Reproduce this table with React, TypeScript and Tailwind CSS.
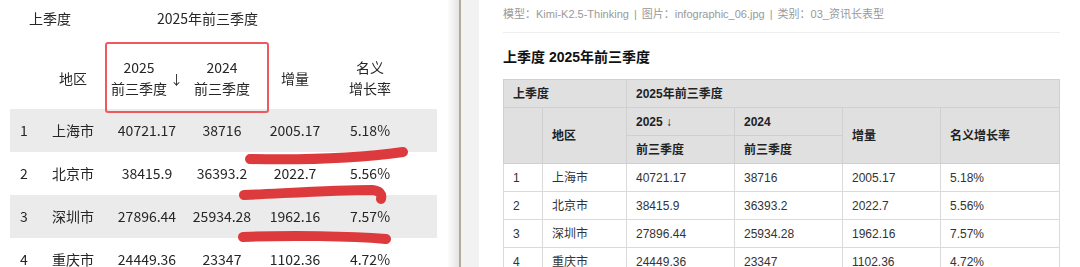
import React from 'react'

const photoRows = [
  { n: '1', city: '上海市', a: '40721.17', b: '38716', inc: '2005.17', rate: '5.18%', shade: true },
  { n: '2', city: '北京市', a: '38415.9', b: '36393.2', inc: '2022.7', rate: '5.56%', shade: false },
  { n: '3', city: '深圳市', a: '27896.44', b: '25934.28', inc: '1962.16', rate: '7.57%', shade: true },
  { n: '4', city: '重庆市', a: '24449.36', b: '23347', inc: '1102.36', rate: '4.72%', shade: false },
]

const cols = 'grid grid-cols-[28px_70px_78px_72px_74px_76px]'

function PhotoPanel() {
  return (
    <div className="relative h-full w-[447px] shrink-0 overflow-hidden bg-white font-['Noto_Sans_CJK_SC','Noto_Sans',sans-serif] text-[14px] text-[#262626] blur-[0.3px]">
      <div className="flex h-[36px] items-center">
        <span className="ml-[29px] w-[128px]">上季度</span>
        <span>2025年前三季度</span>
      </div>
      <div className={`${cols} mx-[10px] mt-[11px] h-[62px] items-center leading-[21px]`}>
        <div />
        <div className="text-center">地区</div>
        <div className="flex items-center justify-center gap-[3px]">
          <div className="flex flex-col items-center">
            <span>2025</span>
            <span>前三季度</span>
          </div>
          <span className="text-[13px]">↓</span>
        </div>
        <div className="flex flex-col items-center">
          <span>2024</span>
          <span>前三季度</span>
        </div>
        <div className="text-center">增量</div>
        <div className="flex flex-col items-center">
          <span>名义</span>
          <span>增长率</span>
        </div>
      </div>
      {photoRows.map((r) => (
        <div key={r.n} className={`${cols} mx-[10px] h-[43px] items-center ${r.shade ? 'bg-[#ebebeb]' : 'bg-white'}`}>
          <span className="pl-[10px]">{r.n}</span>
          <span className="text-center">{r.city}</span>
          <span className="text-center">{r.a}</span>
          <span className="text-center">{r.b}</span>
          <span className="text-center">{r.inc}</span>
          <span className="text-center">{r.rate}</span>
        </div>
      ))}

      {/* highlight box and marker strokes drawn over the photo */}
      <div className="absolute left-[105px] top-[42px] h-[71px] w-[164px] rounded-[3px] border-2 border-[#ec5a60]" />
      <svg className="absolute left-0 top-0" width="447" height="267" viewBox="0 0 447 267" fill="none">
        <g stroke="#dc3a3c" strokeWidth="10" strokeLinecap="round" strokeLinejoin="round">
          <path d="M250 159 C 300 160, 360 158, 403 152" />
          <path d="M244 195 C 290 193, 335 190, 372 190 Q 383 191, 381 199" />
          <path d="M243 237 C 290 235, 350 236, 386 239" />
        </g>
      </svg>
    </div>
  )
}

function DocPanel() {
  const th = 'border border-[#d0d0d0] bg-[#e0e0e0] px-[9px] text-left align-middle font-bold text-[#222]'
  const td = 'border border-[#dadada] px-[9px] text-left align-middle text-[#333]'
  const rows = [
    ['1', '上海市', '40721.17', '38716', '2005.17', '5.18%'],
    ['2', '北京市', '38415.9', '36393.2', '2022.7', '5.56%'],
    ['3', '深圳市', '27896.44', '25934.28', '1962.16', '7.57%'],
    ['4', '重庆市', '24449.36', '23347', '1102.36', '4.72%'],
  ]
  return (
    <div className="min-w-0 flex-1 bg-white pl-[24px] pr-[20px] pt-[6px] font-['Liberation_Sans','Noto_Sans_CJK_SC',sans-serif]">
      <div className="border-b border-[#eeeeee] pb-[10px] text-[11px] leading-[16px] text-[#999]">
        模型：Kimi-K2.5-Thinking<span className="mx-[5px]">|</span>图片：infographic_06.jpg<span className="mx-[5px]">|</span>类别：03_资讯长表型
      </div>
      <h2 className="mb-[12px] mt-[14px] text-[14px] font-bold leading-[20px] text-[#111]">上季度 2025年前三季度</h2>
      <table className="w-[556px] table-fixed border-collapse text-[12px] leading-[16px]">
        <colgroup>
          <col className="w-[39px]" />
          <col className="w-[84px]" />
          <col className="w-[108px]" />
          <col className="w-[108px]" />
          <col className="w-[98px]" />
          <col className="w-[119px]" />
        </colgroup>
        <thead>
          <tr className="h-[28px]">
            <th colSpan={2} className={th}>上季度</th>
            <th colSpan={4} className={th}>2025年前三季度</th>
          </tr>
          <tr className="h-[28px]">
            <th rowSpan={2} className={th} />
            <th rowSpan={2} className={th}>地区</th>
            <th className={th}>2025 ↓</th>
            <th className={th}>2024</th>
            <th rowSpan={2} className={th}>增量</th>
            <th rowSpan={2} className={th}>名义增长率</th>
          </tr>
          <tr className="h-[28px]">
            <th className={th}>前三季度</th>
            <th className={th}>前三季度</th>
          </tr>
        </thead>
        <tbody>
          {rows.map((r) => (
            <tr key={r[0]} className="h-[28px]">
              {r.map((c, i) => (
                <td key={i} className={td}>{c}</td>
              ))}
            </tr>
          ))}
        </tbody>
      </table>
    </div>
  )
}

export default function App() {
  return (
    <div className="flex h-[267px] w-[1080px] overflow-hidden bg-white">
      <PhotoPanel />
      <div className="w-[12px] shrink-0 bg-gradient-to-r from-white to-[#e4e4e4]" />
      <div className="w-[2px] shrink-0 bg-[#b2aa9b]" />
      <div className="w-[18px] shrink-0 bg-[#f2f2f2]" />
      <DocPanel />
    </div>
  )
}
